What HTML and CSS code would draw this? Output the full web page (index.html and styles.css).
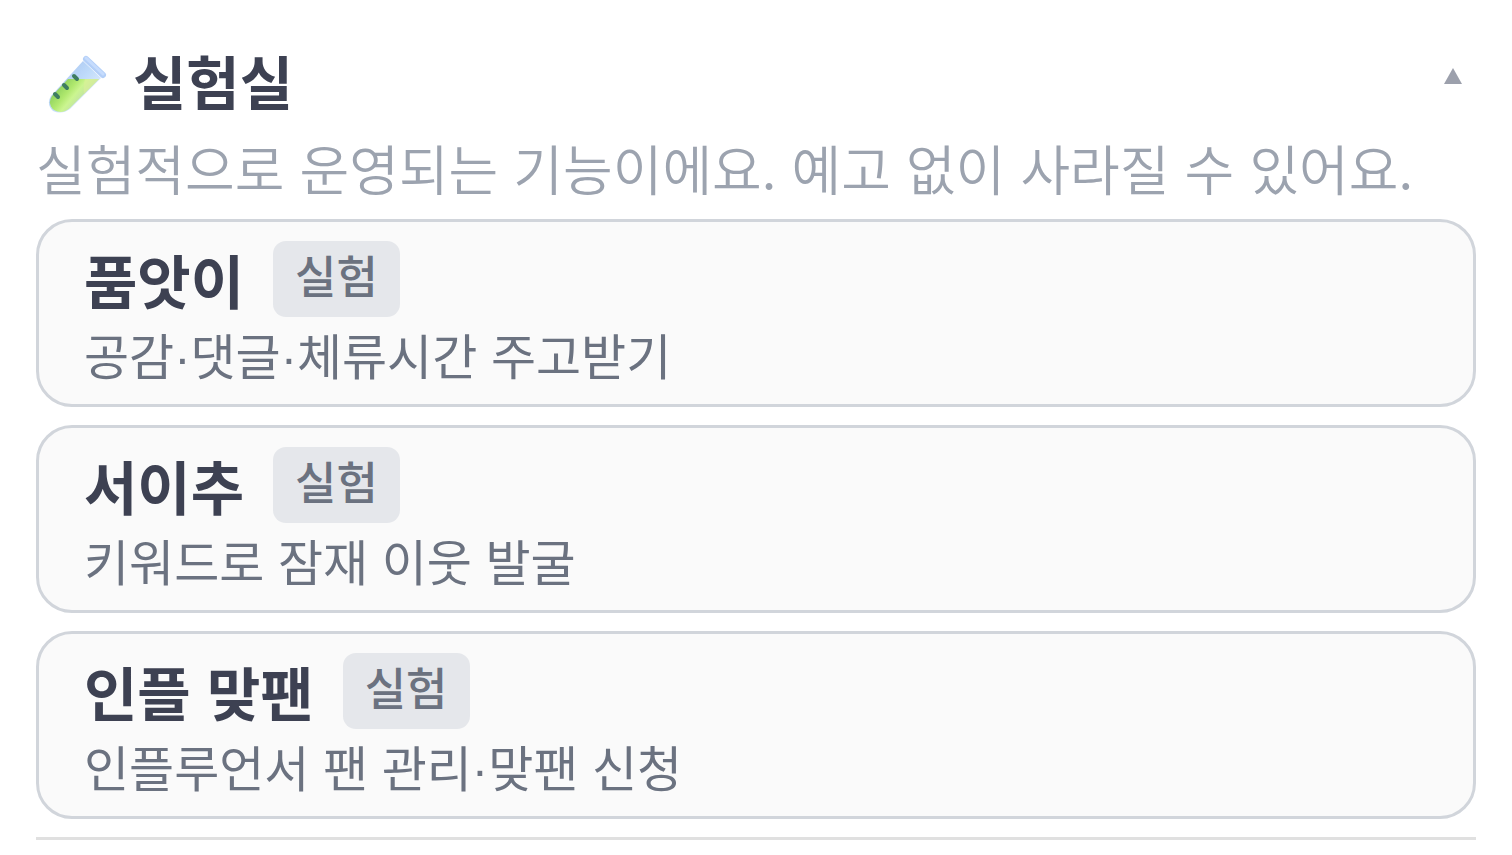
FILE: index.html
```html
<!DOCTYPE html>
<html lang="ko">

<head>
    <title>실험실</title>
    <meta charset="UTF-8">
    <meta name="viewport" content="width=device-width, initial-scale=1">
    <link rel="stylesheet" href="styles.css">
</head>

<body>
    <section class="lab">
        <h2 class="lab-heading">
            <button type="button" class="lab-toggle" aria-expanded="true" aria-controls="lab-body">
                <svg class="lab-icon" viewBox="0 0 60 60" aria-hidden="true">
                    <defs>
                        <linearGradient id="glass" gradientUnits="userSpaceOnUse" x1="28" y1="14" x2="45" y2="31">
                            <stop offset="0" stop-color="#b4d0f5"/>
                            <stop offset="0.5" stop-color="#bfdbfa"/>
                            <stop offset="1" stop-color="#d3e5fb"/>
                        </linearGradient>
                        <linearGradient id="liquid" gradientUnits="userSpaceOnUse" x1="10" y1="35" x2="28" y2="50">
                            <stop offset="0" stop-color="#92d460"/>
                            <stop offset="0.4" stop-color="#b0e86e"/>
                            <stop offset="0.7" stop-color="#cbf590"/>
                            <stop offset="1" stop-color="#c3e6a0"/>
                        </linearGradient>
                    </defs>
                    <path d="M35 7 L53 24 L22 55 Q14 61 5 57 Q-2 50 3 42 Z" fill="url(#glass)"/>
                    <path d="M20 25 H51 L22 54 Q14 61 6 56 Q-1 50 4 42 Z" fill="url(#liquid)"/>
                    <path d="M37 25 H51 L36 40 Q35 31 37 25 Z" fill="#dcf09a" opacity="0.6"/>
                    <path d="M38 5 L55 21" fill="none" stroke="#b3cff8" stroke-width="6" stroke-linecap="round"/>
                    <path d="M38 4 L55 20" fill="none" stroke="#c6dcfd" stroke-width="3" stroke-linecap="round"/>
                    <path d="M26 22 L29 25 M16 31 L19 34 M7 40 L10 43" fill="none" stroke="#3f7d61" stroke-width="4" stroke-linecap="round"/>
                </svg>
                <span class="lab-title">실험실</span>
                <svg class="lab-arrow" viewBox="0 0 18 16" aria-hidden="true">
                    <path d="M9 0 L18 16 H0 Z" fill="currentColor"/>
                </svg>
            </button>
        </h2>
        <div id="lab-body">
            <p class="lab-notice">실험적으로 운영되는 기능이에요. 예고 없이 사라질 수 있어요.</p>
            <div class="lab-list">
                <button type="button" class="card">
                    <span class="card-head">
                        <strong class="card-title">품앗이</strong>
                        <span class="badge">실험</span>
                    </span>
                    <span class="card-desc">공감·댓글·체류시간 주고받기</span>
                </button>
                <button type="button" class="card">
                    <span class="card-head">
                        <strong class="card-title">서이추</strong>
                        <span class="badge">실험</span>
                    </span>
                    <span class="card-desc">키워드로 잠재 이웃 발굴</span>
                </button>
                <button type="button" class="card">
                    <span class="card-head">
                        <strong class="card-title">인플 맞팬</strong>
                        <span class="badge">실험</span>
                    </span>
                    <span class="card-desc">인플루언서 팬 관리·맞팬 신청</span>
                </button>
            </div>
        </div>
    </section>
    <script>
        var toggle = document.getElementsByClassName("lab-toggle")[0];
        var body = document.getElementById("lab-body");

        toggle.addEventListener("click", function() {
            body.hidden = !body.hidden;
            toggle.setAttribute("aria-expanded", String(!body.hidden));
        })
    </script>
</body>

</html>
```

FILE: styles.css
```css
* {
    box-sizing: border-box;
}

body {
    margin: 0;
    padding: 42px 36px 0;
    background: #fff;
    font-family: "Noto Sans CJK KR", sans-serif;
}

button {
    font-family: inherit;
    cursor: pointer;
}

.lab {
    padding-bottom: 18px;
    border-bottom: 3px solid #e0e0e0;
}

.lab-heading {
    margin: 0;
}

.lab-toggle {
    display: flex;
    align-items: center;
    width: 100%;
    padding: 0 14px 0 12px;
    border: 0;
    background: none;
    color: #3d4152;
}

.lab-icon {
    width: 60px;
    height: 60px;
    margin-right: 25px;
}

.lab-title {
    padding-bottom: 8px;
    font-size: 58px;
    font-weight: 700;
    line-height: 76px;
}

.lab-arrow {
    width: 18px;
    height: 16px;
    margin: 0 0 16px auto;
    color: #9ca0ac;
}

.lab-toggle[aria-expanded="false"] .lab-arrow {
    transform: rotate(180deg);
}

.lab-notice {
    margin: 0 0 9px;
    color: #9ca3af;
    font-family: "Noto Sans CJK KR DemiLight", "Noto Sans CJK KR", sans-serif;
    font-size: 54px;
    font-weight: 350;
    line-height: 84px;
}

.lab-list {
    display: flex;
    flex-direction: column;
    gap: 18px;
}

.card {
    display: block;
    width: 100%;
    padding: 19px 45px 5px;
    border: 3px solid #d1d5db;
    border-radius: 36px;
    background: #fafafa;
    text-align: left;
}

.card-head {
    display: flex;
    align-items: center;
    gap: 29px;
}

.card-title {
    color: #3d4152;
    font-size: 58px;
    font-weight: 700;
    line-height: 76px;
}

.badge {
    padding: 0 22px 8px;
    border-radius: 13px;
    background: #e5e7eb;
    color: #6b7280;
    font-size: 45px;
    font-weight: 500;
    line-height: 68px;
}

.card-desc {
    display: block;
    color: #6b7280;
    font-family: "Liberation Sans", "Noto Sans CJK KR", sans-serif;
    font-size: 49px;
    line-height: 82px;
}
```
